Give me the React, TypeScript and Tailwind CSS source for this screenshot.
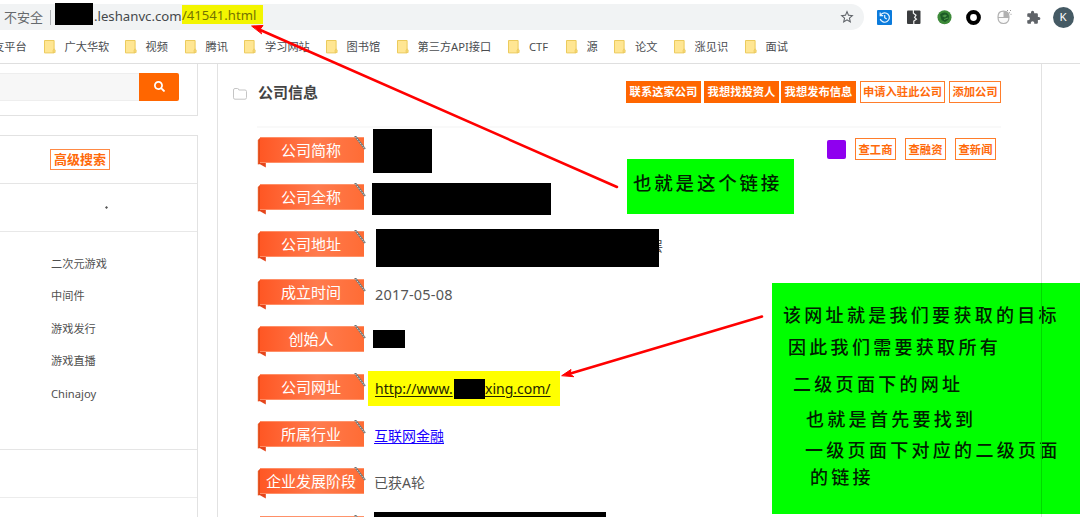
import React from "react";
import { FaSearch } from "react-icons/fa";
import { MdExtension, MdStarBorder } from "react-icons/md";

const bookmarks = [
  { name: "广大华软", width: "w-[81px]" },
  { name: "视频", width: "w-[60px]" },
  { name: "腾讯", width: "w-[59.5px]" },
  { name: "学习网站", width: "w-[81.5px]" },
  { name: "图书馆", width: "w-[71px]" },
  { name: "第三方API接口", width: "w-[111.5px]" },
  { name: "CTF", width: "w-[57.5px]" },
  { name: "源", width: "w-[48.5px]" },
  { name: "论文", width: "w-[59.5px]" },
  { name: "涨见识", width: "w-[71px]" },
  { name: "面试", width: "w-[60px]" },
];

const categories = ["二次元游戏", "中间件", "游戏发行", "游戏直播", "Chinajoy"];

function Folder() {
  return (
    <svg width="12" height="14" viewBox="0 0 12 14" className="shrink-0">
      <path d="M.5.5h9.600v12.400H.5z" fill="#ffe693" stroke="#eccb5c" />
      <path d="M9 12.500V10l1.200-1.200 1 1.500v2.200z" fill="#f5d873" stroke="#e9c659" strokeWidth=".6" />
    </svg>
  );
}

function Extensions() {
  return (
    <div className="flex items-center">
      <svg width="15" height="15" viewBox="0 0 15 15">
        <rect width="15" height="15" rx="1" fill="#0b7bdc" />
        <path d="M3.700 5A4.700 4.700 0 1 1 3.200 9M3.200 2.600v3h3M7.700 4.900v2.800l2 1.400" fill="none" stroke="#e8f4ff" strokeWidth="1.200" />
      </svg>
      <svg width="14" height="14" viewBox="0 0 14 14" className="ml-[15px]">
        <rect y=".5" width="13.500" height="13.500" rx="1" fill="#3b3d3f" />
        <path d="M6.400 0v3.200L9 5.200 7.600 7.500 9.400 9.200 6.800 11v3" fill="none" stroke="#f2f2f2" strokeWidth="1.200" />
      </svg>
      <svg width="15" height="15" viewBox="0 0 15 15" className="ml-[15.500px]">
        <circle cx="7.500" cy="7.300" r="7" fill="#3d8a39" />
        <path d="M3 4.500Q6 1.500 10 3l2 2.500-.5 4L8 12l-3.500-2z" fill="#1d5b26" />
        <path d="m5 6 3-1.500 2 1L8 7.500z" fill="#4c9647" />
        <path d="M7 9.500 11 8" stroke="#54a04b" />
      </svg>
      <svg width="15" height="15" viewBox="0 0 15 15" className="ml-[14.500px]">
        <circle cx="7.500" cy="7.500" r="5.400" fill="#fff" stroke="#000" strokeWidth="4" />
      </svg>
      <svg width="15" height="16" viewBox="0 0 15 16" className="ml-[15.500px]">
        <path d="M6.500 2.200C3 2.200 1 4 1 8s2 6.500 5.500 6.500S12 12 12 8 10 2.200 6.500 2.200ZM1 8.500h11" fill="#fafafa" stroke="#b0b0b0" strokeWidth="1.200" />
        <path d="M6.500 2.200C10 2.200 12 4 12 8.500H6.500z" fill="#b0b0b0" />
        <path d="M10 1.500h1m2 0h1M12 3.800h1m1 1v1" stroke="#999" strokeWidth="1" />
      </svg>
      <MdExtension className="ml-[14px] size-[15px] text-[#5f6368]" />
      <span className="ml-[12px] flex size-[21px] shrink-0 items-center justify-center rounded-full bg-[#455a64] text-[11.500px] text-white">K</span>
    </div>
  );
}

function Ribbon({ children }: { children: React.ReactNode }) {
  return (
    <div className="relative h-8 w-[108px] shrink-0">
      <svg width="110" height="33" viewBox="0 0 110 33" className="absolute inset-0">
        <defs>
          <linearGradient id="ribbon">
            <stop offset="0" stopColor="#ff5724" />
            <stop offset=".55" stopColor="#ff7b4e" />
            <stop offset="1" stopColor="#ff6c35" />
          </linearGradient>
          <linearGradient id="edge">
            <stop offset="0" stopColor="#f0672f" />
            <stop offset="1" stopColor="#d93a12" />
          </linearGradient>
        </defs>
        <path d="M.8 4 3.500 1.500V28L.8 28.500z" fill="url(#edge)" />
        <path d="M.8 27h8v4.500z" fill="#e5451b" />
        <path d="M3 1h104v26H3z" fill="url(#ribbon)" />
        <path d="M3 1.500h104M3 26.500h104" stroke="#ffa27f" strokeOpacity=".7" />
        <path d="m98 0 10 13" stroke="#6f7474" strokeWidth="2" />
        <path d="m98.500 1 9.500 12" stroke="#d3cfca" strokeWidth="1" strokeDasharray="1.500 1" />
      </svg>
      <span className="relative flex h-[29px] items-center justify-center whitespace-nowrap text-[15px] text-white">{children}</span>
    </div>
  );
}

function Row({ label, children }: { label: string; children: React.ReactNode }) {
  return (
    <div className="flex h-[47.400px] shrink-0 items-center">
      <Ribbon>{label}</Ribbon>
      <div className="flex flex-1 items-center pl-[9px] text-[14px] text-[#555]">{children}</div>
    </div>
  );
}

function SolidButton({ children }: { children: React.ReactNode }) {
  return <button className="h-[22px] w-[75px] whitespace-nowrap bg-[#ff6600] text-[11.300px] font-bold text-white">{children}</button>;
}

function OutlineButton({ width, children }: { width: string; children: React.ReactNode }) {
  return <button className={`${width} h-[22px] whitespace-nowrap border border-[#ff7d2b] text-[11.300px] font-bold text-[#ff6a0a]`}>{children}</button>;
}

export default function App() {
  return (
    <div className="relative flex h-[517px] w-[1080px] flex-col overflow-hidden bg-white font-['Noto_Sans','Noto_Sans_CJK_SC',sans-serif] leading-none">
      <header className="flex h-[34px] shrink-0 items-center">
        <div className="mr-[13px] flex h-[26px] w-[864px] items-center rounded-r-full bg-[#f1f3f4] pl-1">
          <span className="w-[46px] whitespace-nowrap text-[13px] text-[#666a6d]">不安全</span>
          <span className="mr-1 h-[15px] w-px bg-[#aeb1b4]" />
          <span className="-mt-[6px] h-[22px] w-[38px] bg-black" />
          <span className="-mt-px w-[89px] whitespace-nowrap pl-px text-[13.200px] text-[#44484b]">.leshanvc.com</span>
          <span className="-mt-[5px] flex h-[19px] w-[81px] items-center whitespace-nowrap bg-[#f3f500] pt-[3px] text-[13.100px] text-[#737300]">/41541.html</span>
          <MdStarBorder className="ml-auto mr-[9px] size-4 text-[#5f6368]" />
        </div>
        <Extensions />
      </header>

      <nav className="flex h-[30px] shrink-0 items-center border-b border-[#dfdfdf] pb-[4px] text-[11.200px] text-[#4a4c4f]">
        <span className="-ml-[7px] w-[50.500px] shrink-0 whitespace-nowrap">友平台</span>
        {bookmarks.map((item) => (
          <a key={item.name} className={`${item.width} flex shrink-0 items-center gap-[9px] whitespace-nowrap`}>
            <Folder />
            {item.name}
          </a>
        ))}
      </nav>

      <div className="flex min-h-0 flex-1">
        <aside className="w-[198px] shrink-0">
          <div className="flex h-[52px] border-r border-b border-[#e2e2e2] pt-[9px]">
            <div className="h-[28px] w-[139px] border-y border-[#eee] bg-[#f7f7f7]" />
            <button className="flex h-[28px] w-10 items-center justify-center rounded-r-[2px] bg-[#ff6600] pb-px">
              <FaSearch className="size-[11px] text-white" />
            </button>
          </div>
          <div className="mt-[19px] h-[400px] border-t border-r border-[#e2e2e2]">
            <div className="flex h-12 items-center border-b border-[#e5e5e5] pl-[50px]">
              <button className="h-[21px] w-[60px] whitespace-nowrap border border-[#ff8a45] text-[13px] font-bold text-[#ff6a0a]">高级搜索</button>
            </div>
            <div className="flex h-12 items-center border-b border-[#e8e8e8] pl-[105px]">
              <svg width="3" height="3" viewBox="0 0 3 3"><path d="M1.500 0 3 1.500 1.500 3 0 1.500Z" fill="#555" /></svg>
            </div>
            <ul className="h-[218px] border-b border-[#e5e5e5] pt-[15px] pl-[51px] text-[11.200px] text-[#505050]">
              {categories.map((name) => (
                <li key={name} className="flex h-[32.600px] items-center">{name}</li>
              ))}
            </ul>
            <div className="h-12 border-b border-[#ececec]" />
          </div>
        </aside>

        <main className="ml-[19px] w-[825px] shrink-0 border-x border-[#e2e2e2] pr-10 pl-[15px]">
          <div className="flex h-[62px] items-center pb-[6px]">
            <svg width="14" height="12" viewBox="0 0 14 12" className="mt-[3px]">
              <path d="M.5 9.800V2Q.5.500 2 .500h2.500Q5.800.500 5.800 2H12q1.500 0 1.500 1.500v6q0 1.700-1.500 1.700H2Q.5 11.200.5 9.800Z" fill="none" stroke="#c5c5c5" />
            </svg>
            <h1 className="ml-[11px] text-[15px] font-bold text-[#444]">公司信息</h1>
            <div className="ml-auto flex">
              <SolidButton>联系这家公司</SolidButton>
              <span className="w-[3px]" />
              <SolidButton>我想找投资人</SolidButton>
              <span className="w-[2px]" />
              <SolidButton>我想发布信息</SolidButton>
              <span className="w-[4px]" />
              <OutlineButton width="w-[85px]">申请入驻此公司</OutlineButton>
              <span className="w-1" />
              <OutlineButton width="w-[52px]">添加公司</OutlineButton>
            </div>
          </div>
          <section className="ml-6 border-t-2 border-[#f9f9f9]">
            <Row label="公司简称">
              <span className="-mt-[2px] -ml-px h-[44px] w-[59px] bg-black" />
              <div className="-mt-[5px] mr-[5px] ml-auto flex items-center gap-[9px]">
                <span className="size-[19px] rounded-[2px] bg-[#8f00ef]" />
                <OutlineButton width="w-[41px]">查工商</OutlineButton>
                <OutlineButton width="w-[41px]">查融资</OutlineButton>
                <OutlineButton width="w-[41px]">查新闻</OutlineButton>
              </div>
            </Row>
            <Row label="公司全称">
              <span className="-ml-[2px] h-8 w-[179px] bg-black" />
            </Row>
            <Row label="公司地址">
              <span className="mt-[3px] ml-[2px] h-[38px] w-[283px] bg-black" />
              <span className="flex w-1 justify-end overflow-hidden"><span>层</span></span>
            </Row>
            <Row label="成立时间">
              <span className="pl-px text-[14.500px] tracking-[0.200px]">2017-05-08</span>
            </Row>
            <Row label="创始人">
              <span className="-mt-[4px] -ml-px h-[18px] w-8 bg-black" />
            </Row>
            <Row label="公司网址">
              <a className="-ml-[6px] flex h-[35px] w-[192px] items-center whitespace-nowrap bg-[#ffff00] pl-[7px] text-[14px] text-[#252500] underline underline-offset-2">
                <span className="w-[79px]">http://www.</span>
                <span className="h-5 w-[31px] bg-black" />
                <span>xing.com/</span>
              </a>
            </Row>
            <Row label="所属行业">
              <a className="-mt-px text-[#1800ff] underline underline-offset-2">互联网金融</a>
            </Row>
            <Row label="企业发展阶段">已获A轮</Row>
            <Row label="融资信息">
              <span className="h-[38px] w-[232px] bg-black" />
            </Row>
          </section>
        </main>
      </div>

      <div className="absolute top-[159px] left-[627px] h-[55px] w-[167px] bg-[#00ff00] pt-[15px] pl-[6px] text-[18.500px] font-medium tracking-[2.800px] whitespace-nowrap text-[#002000]">
        也就是这个链接
      </div>
      <div className="absolute top-[283px] left-[772px] flex h-[231px] w-[308px] flex-col bg-[#00ff00] pt-4 text-[18px] leading-8 font-medium tracking-[3.300px] whitespace-nowrap text-[#002000]">
        <p className="h-8 pl-[11px]">该网址就是我们要获取的目标</p>
        <p className="h-[37px] pl-[16px]">因此我们需要获取所有</p>
        <p className="h-[35px] pl-[21px]">二级页面下的网址</p>
        <p className="h-[31px] pl-[34px]">也就是首先要找到</p>
        <p className="h-[27px] pl-[33px]">一级页面下对应的二级页面</p>
        <p className="pl-[38px]">的链接</p>
      </div>
      <svg width="1080" height="517" viewBox="0 0 1080 517" className="pointer-events-none absolute inset-0">
        <g stroke="#ff0000" strokeWidth="2.500" strokeLinecap="round" fill="#ff0000">
          <path d="M258 29 617 187" />
          <path d="m252 26 11-.5-3 4 1.500 4Z" strokeWidth="1" />
          <path d="M567 374.500 762 316.500" />
          <path d="m562 375.500 9-6-1 4.500 3.500 2.500Z" strokeWidth="1" />
        </g>
        <path d="M1041.500 283v231" stroke="#00d800" />
      </svg>
    </div>
  );
}
